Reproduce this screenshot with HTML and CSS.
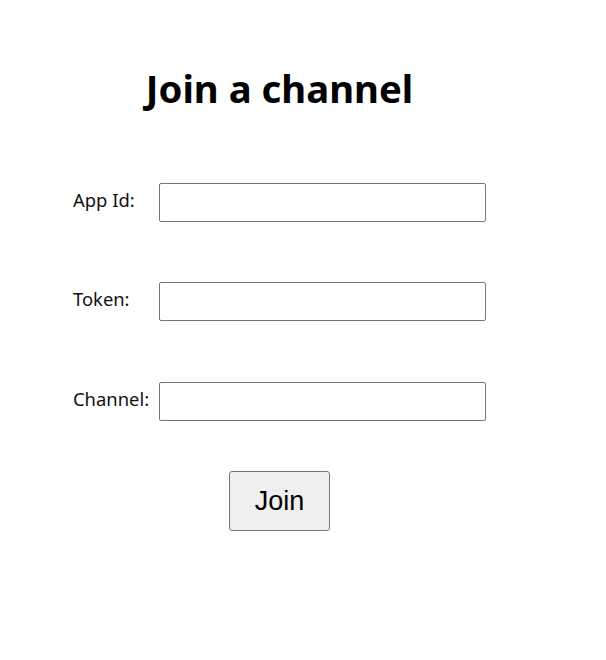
FILE: index.html
```html
<!DOCTYPE html>
<html>
<head>
<meta charset="utf-8">
<link rel="stylesheet" href="styles.css">
</head>
<body>
<div class="page">
  <h1 class="title">Join a channel</h1>
  <form class="form">
    <div class="row">
      <label class="label" for="appid">App Id:</label>
      <input class="field" id="appid" type="text">
    </div>
    <div class="row">
      <label class="label" for="token">Token:</label>
      <input class="field" id="token" type="text">
    </div>
    <div class="row row-shift">
      <label class="label" for="channel">Channel:</label>
      <input class="field" id="channel" type="text">
    </div>
    <div class="actions">
      <button class="btn" type="button">Join</button>
    </div>
  </form>
</div>
</body>
</html>
```

FILE: styles.css
```css
html, body {
  margin: 0;
  padding: 0;
  background: #ffffff;
}
body {
  font-family: "Noto Sans", "Open Sans", sans-serif;
  color: #000;
}
.page {
  width: 413px;
  padding-left: 73px;
  padding-top: 60px;
}
.title {
  margin: 0;
  text-align: center;
  font-size: 38.3px;
  font-weight: 700;
  line-height: 56px;
  height: 123px;
}
.form {
  display: flex;
  flex-direction: column;
  gap: 60px;
}
.row {
  display: flex;
  align-items: center;
  height: 39px;
}
.row-shift {
  margin-top: 1px;
}
.label {
  width: 86px;
  font-size: 18.4px;
  color: #111;
  padding-bottom: 7px;
  white-space: nowrap;
}
.field {
  box-sizing: border-box;
  width: 327px;
  height: 39px;
  margin: 0;
  border: 1px solid #767676;
  border-radius: 2px;
  background: #fff;
}
.actions {
  margin-top: -10px;
  padding-left: 156px;
}
.btn {
  box-sizing: border-box;
  width: 101px;
  height: 60px;
  margin: 0;
  padding: 0;
  border: 1px solid #767676;
  border-radius: 3px;
  background: #efefef;
  font-family: "Liberation Sans", Arial, sans-serif;
  font-size: 27px;
  color: #000;
}
```
